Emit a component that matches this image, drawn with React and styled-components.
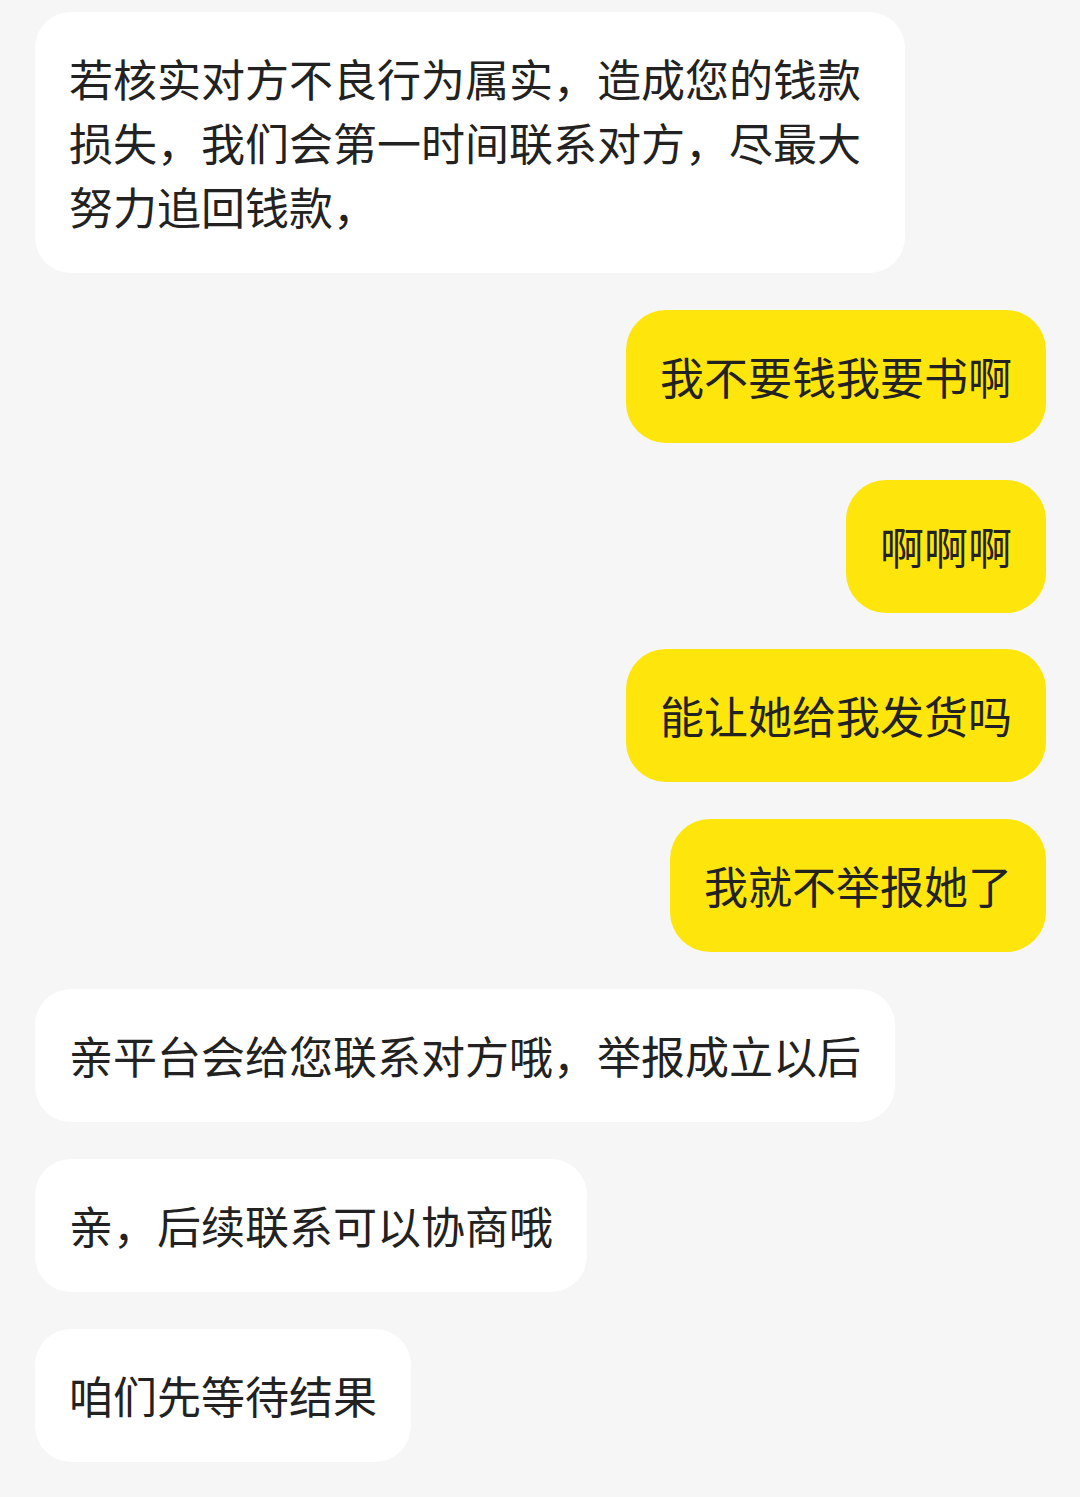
import React from 'react';
import styled, { createGlobalStyle } from 'styled-components';

const GlobalStyle = createGlobalStyle`
  html, body {
    margin: 0;
    padding: 0;
    background: #f6f6f6;
  }
`;

const Chat = styled.div`
  display: flex;
  flex-direction: column;
  gap: 36.8px;
  padding: 12px 34px 30px 35px;
  min-height: 1497px;
  box-sizing: border-box;
  background: #f6f6f6;
  font-family: "Noto Sans CJK SC", "Noto Sans", sans-serif;
`;

const Bubble = styled.div`
  align-self: ${(p) => (p.mine ? 'flex-end' : 'flex-start')};
  max-width: 870px;
  box-sizing: border-box;
  padding: 34px 34px 35px;
  border-radius: ${(p) => (p.mine ? '40px' : '36px')};
  background: ${(p) => (p.mine ? '#fee50c' : '#ffffff')};
  color: #222;
  font-size: 44px;
  line-height: 64px;
  word-break: break-all;
`;

const messages = [
  { text: '若核实对方不良行为属实，造成您的钱款损失，我们会第一时间联系对方，尽最大努力追回钱款，' },
  { text: '我不要钱我要书啊', mine: true },
  { text: '啊啊啊', mine: true },
  { text: '能让她给我发货吗', mine: true },
  { text: '我就不举报她了', mine: true },
  { text: '亲平台会给您联系对方哦，举报成立以后' },
  { text: '亲，后续联系可以协商哦' },
  { text: '咱们先等待结果' },
];

const App = () => (
  <>
    <GlobalStyle />
    <Chat>
      {messages.map((m, i) => (
        <Bubble key={i} mine={m.mine}>
          {m.text}
        </Bubble>
      ))}
    </Chat>
  </>
);

export default App;
